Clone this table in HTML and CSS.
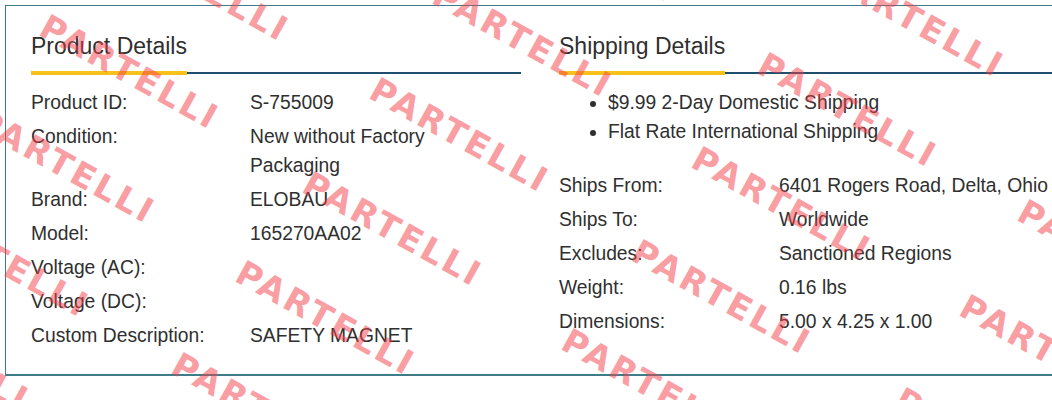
FILE: index.html
```html
<!DOCTYPE html>
<html lang="en">
<head>
<meta charset="utf-8">
<title>Product Details</title>
<link rel="stylesheet" href="styles.css">
</head>
<body>
<div class="page">
  <div class="card">
    <section class="col col-product">
      <div class="section-head"><h2 class="title">Product Details</h2></div>
      <dl class="specs specs-product">
        <div class="row"><dt>Product ID:</dt><dd>S-755009</dd></div>
        <div class="row"><dt>Condition:</dt><dd>New without Factory Packaging</dd></div>
        <div class="row"><dt>Brand:</dt><dd>ELOBAU</dd></div>
        <div class="row"><dt>Model:</dt><dd>165270AA02</dd></div>
        <div class="row"><dt>Voltage (AC):</dt><dd></dd></div>
        <div class="row"><dt>Voltage (DC):</dt><dd></dd></div>
        <div class="row"><dt>Custom Description:</dt><dd>SAFETY MAGNET</dd></div>
      </dl>
    </section>
    <section class="col col-shipping">
      <div class="section-head"><h2 class="title">Shipping Details</h2></div>
      <ul class="ship-list">
        <li>$9.99 2-Day Domestic Shipping</li>
        <li>Flat Rate International Shipping</li>
      </ul>
      <dl class="specs specs-shipping">
        <div class="row"><dt>Ships From:</dt><dd>6401 Rogers Road, Delta, Ohio</dd></div>
        <div class="row"><dt>Ships To:</dt><dd>Worldwide</dd></div>
        <div class="row"><dt>Excludes:</dt><dd>Sanctioned Regions</dd></div>
        <div class="row"><dt>Weight:</dt><dd>0.16 lbs</dd></div>
        <div class="row"><dt>Dimensions:</dt><dd>5.00 x 4.25 x 1.00</dd></div>
      </dl>
    </section>
  </div>
  <div class="watermarks" aria-hidden="true">
    <span class="wm wm-a1">PARTELLI</span>
    <span class="wm wm-a2">PARTELLI</span>
    <span class="wm wm-a3">PARTELLI</span>
    <span class="wm wm-a4">PARTELLI</span>
    <span class="wm wm-a5">PARTELLI</span>
    <span class="wm wm-b0">PARTELLI</span>
    <span class="wm wm-b1">PARTELLI</span>
    <span class="wm wm-b2">PARTELLI</span>
    <span class="wm wm-b3">PARTELLI</span>
    <span class="wm wm-b4">PARTELLI</span>
    <span class="wm wm-b5">PARTELLI</span>
    <span class="wm wm-c1">PARTELLI</span>
    <span class="wm wm-c2">PARTELLI</span>
    <span class="wm wm-c3">PARTELLI</span>
    <span class="wm wm-c4">PARTELLI</span>
    <span class="wm wm-c5">PARTELLI</span>
    <span class="wm wm-d1">PARTELLI</span>
    <span class="wm wm-d2">PARTELLI</span>
    <span class="wm wm-d3">PARTELLI</span>
  </div>
</div>
</body>
</html>
```

FILE: styles.css
```css
html, body {
  margin: 0;
  padding: 0;
  background: #ffffff;
  overflow: hidden;
}

body {
  font-family: "Liberation Sans", Arial, sans-serif;
  color: #2f2f2f;
}

.page {
  position: relative;
  width: 1052px;
  height: 400px;
  overflow: hidden;
}

.card {
  margin: 5px 0 0 5px;
  width: 1100px;
  border: 1px solid #3e7c8a;
  border-bottom-width: 2px;
  border-right: none;
  padding: 27px 0 24px 25px;
  display: flex;
  gap: 38px;
}

.col-product {
  width: 490px;
  flex: none;
}

.col-shipping {
  flex: 1;
}

.section-head {
  display: flex;
  border-bottom: 2px solid #1f4f6c;
}

.title {
  margin: 0 0 -3px 0;
  padding: 0 0 12px 0;
  font-size: 23px;
  font-weight: normal;
  line-height: 26px;
  color: #2f2f2f;
  border-bottom: 4px solid #f8c11b;
}

.specs {
  margin: 14px 0 0 0;
  display: flex;
  flex-direction: column;
  gap: 5px;
  font-size: 19.3px;
  line-height: 29px;
}

.specs .row {
  display: grid;
}

.specs-product .row {
  grid-template-columns: 219px 240px;
}

.specs-shipping .row {
  grid-template-columns: 220px 1fr;
}

.specs dt,
.specs dd {
  margin: 0;
}

.ship-list {
  margin: 14px 0 25px 0;
  padding-left: 49px;
  font-size: 19.3px;
  line-height: 29px;
}

.ship-list + .specs {
  margin-top: 0;
}

.watermarks {
  position: absolute;
  inset: 0;
  pointer-events: none;
}

.wm {
  position: absolute;
  transform: translate(-50%, -50%) rotate(29deg);
  font-family: "DejaVu Sans", sans-serif;
  font-weight: bold;
  font-size: 34px;
  letter-spacing: 3px;
  line-height: 1;
  white-space: nowrap;
  color: rgba(244, 62, 72, 0.5);
}

.wm-a1 { left: 200px; top: -16px; }
.wm-a2 { left: 130px; top: 72px; }
.wm-a3 { left: 66px; top: 166px; }
.wm-a4 { left: 0px; top: 260px; }
.wm-a5 { left: -60px; top: 354px; }

.wm-b0 { left: 588px; top: -55px; }
.wm-b1 { left: 523px; top: 40px; }
.wm-b2 { left: 460px; top: 135px; }
.wm-b3 { left: 393px; top: 229px; }
.wm-b4 { left: 326px; top: 318px; }
.wm-b5 { left: 262px; top: 410px; }

.wm-c1 { left: 915px; top: 20px; }
.wm-c2 { left: 848px; top: 110px; }
.wm-c3 { left: 782px; top: 204px; }
.wm-c4 { left: 722px; top: 297px; }
.wm-c5 { left: 652px; top: 386px; }

.wm-d1 { left: 1108px; top: 257px; }
.wm-d2 { left: 1050px; top: 352px; }
.wm-d3 { left: 985px; top: 445px; }
```
